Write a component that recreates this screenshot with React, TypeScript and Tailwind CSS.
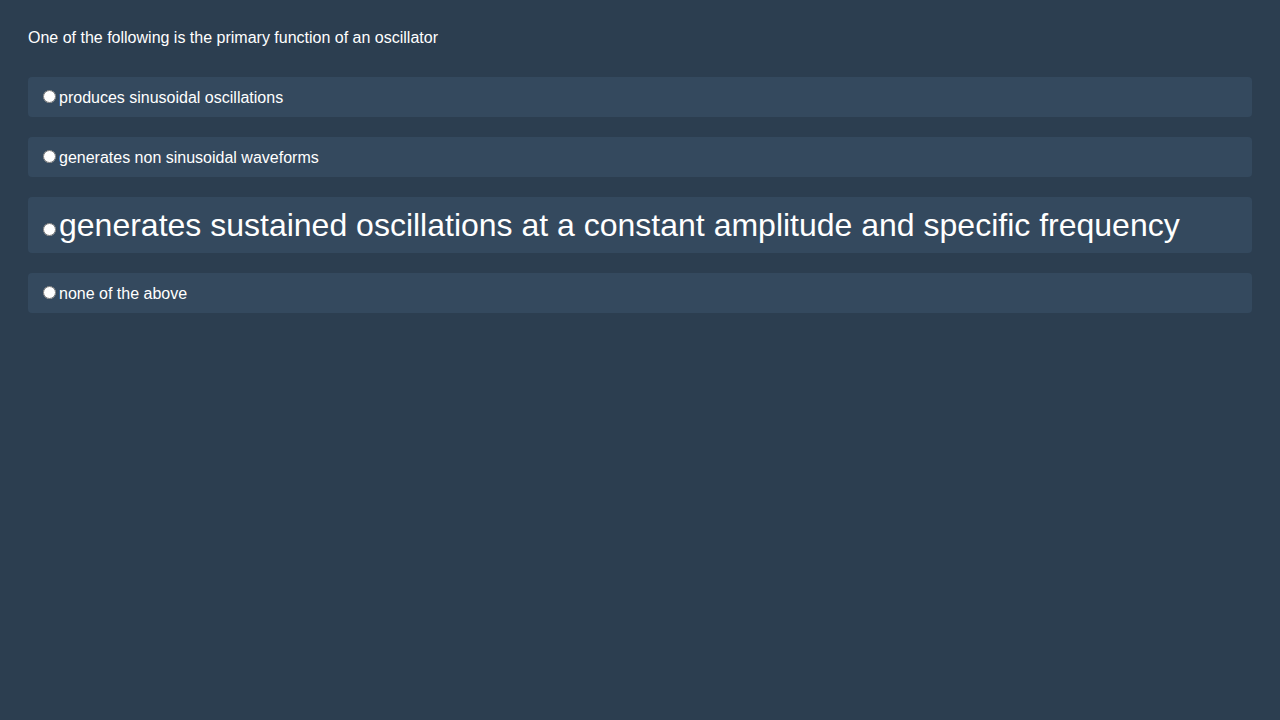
import React from "react";

const options = [
  { text: "produces sinusoidal oscillations", big: false },
  { text: "generates non sinusoidal waveforms", big: false },
  { text: "generates sustained oscillations at a constant amplitude and specific frequency", big: true },
  { text: "none of the above", big: false },
];

export default function App() {
  return (
    <div
      className="min-h-[720px] w-full bg-[#2c3e50] px-[28px] pt-[29px] pb-[28px] text-white"
      style={{ fontFamily: '"Liberation Sans", Arial, sans-serif' }}
    >
      <p className="m-0 text-[16px] leading-[18px] mb-[30px]">
        One of the following is the primary function of an oscillator
      </p>
      <div className="flex flex-col gap-[20px]">
        {options.map((o, i) => (
          <label
            key={i}
            className={
              o.big
                ? "block h-[56px] overflow-hidden rounded-[4px] bg-[#34495e] px-[10px] py-[10px] text-[32px] leading-[36px]"
                : "block h-[40px] overflow-hidden rounded-[4px] bg-[#34495e] px-[10px] py-[10px] text-[16px] leading-[20px]"
            }
          >
            <input
              type="radio"
              name="q"
              className="ml-[5px] mr-[3px] mt-[3px] h-[13px] w-[13px] align-baseline"
            />
            {o.text}
          </label>
        ))}
      </div>
    </div>
  );
}
